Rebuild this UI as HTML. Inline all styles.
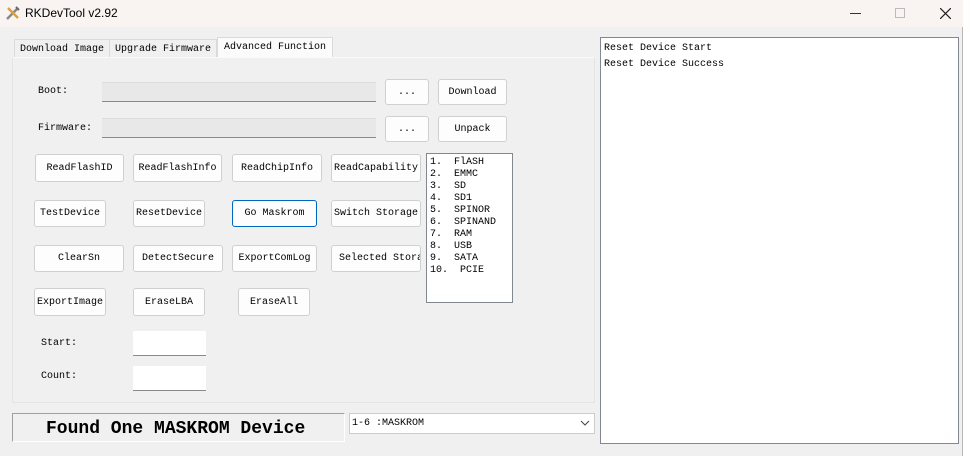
<!DOCTYPE html>
<html><head><style>
*{box-sizing:border-box;margin:0;padding:0}
body{width:970px;height:456px;background:#fff;position:relative;overflow:hidden;font-family:"Liberation Mono","Noto Sans CJK SC",monospace;font-size:10px;color:#000}
.win{position:absolute;left:0;top:0;width:963px;height:456px;background:#f0f0f0;border-right:1px solid #b8b8b8}
.title{position:absolute;left:0;top:0;width:963px;height:27px;background:#f9f4f1;font-family:"Liberation Sans",sans-serif;font-size:12px}
.a{position:absolute}
.btn{position:absolute;background:#fdfdfd;border:1px solid #d0d0d0;border-radius:3px;display:flex;align-items:center;justify-content:center;white-space:nowrap;overflow:hidden}
.in{position:absolute;background:#e8e8e8;border-bottom:1px solid #8a8a8a;border-top:1px solid #ddd}
.wh{position:absolute;background:#fff;border-bottom:1px solid #8a8a8a}
.tab{position:absolute;top:39px;height:19px;padding-top:4px;text-align:center;background:#f0f0f0;border:1px solid #dadada;border-bottom:none}
</style></head><body>
<div class="win"></div>
<div class="title">
<svg class="a" style="left:5px;top:5px" width="16" height="16"><path d="M2 14 L12 4" stroke="#888" stroke-width="2.5"/><path d="M3 3 L13 13" stroke="#e0a030" stroke-width="2.5"/><path d="M11 2 l3 3" stroke="#666" stroke-width="2"/></svg>
<div class="a" style="left:25px;top:6px">RKDevTool v2.92</div>
<div class="a" style="left:850px;top:13px;width:11px;height:1px;background:#333"></div>
<div class="a" style="left:895px;top:8px;width:10px;height:10px;border:1px solid #bbb"></div>
<svg class="a" style="left:940px;top:8px" width="11" height="11"><path d="M0 0L11 11M11 0L0 11" stroke="#222" stroke-width="1.2"/></svg>
</div>
<div class="tab" style="left:14px;width:96px">Download Image</div>
<div class="tab" style="left:109px;width:108px">Upgrade Firmware</div>
<div class="tab" style="left:217px;width:116px;top:37px;height:21px;padding-top:4px;background:#fbfbfb">Advanced Function</div>
<div class="a" style="left:12px;top:57px;width:583px;height:346px;border:1px solid #e4e4e4;border-top-color:#fafafa;background:#f0f0f0"></div>
<div class="a" style="left:38px;top:86px">Boot:</div>
<div class="in" style="left:102px;top:82px;width:274px;height:20px"></div>
<div class="btn" style="left:385px;top:79px;width:44px;height:26px">...</div>
<div class="btn" style="left:438px;top:79px;width:69px;height:26px">Download</div>
<div class="a" style="left:38px;top:123px">Firmware:</div>
<div class="in" style="left:102px;top:118px;width:274px;height:20px"></div>
<div class="btn" style="left:385px;top:116px;width:44px;height:26px">...</div>
<div class="btn" style="left:438px;top:116px;width:69px;height:26px">Unpack</div>

<div class="btn" style="left:35px;top:154px;width:89px;height:28px">ReadFlashID</div>
<div class="btn" style="left:133px;top:154px;width:89px;height:28px">ReadFlashInfo</div>
<div class="btn" style="left:232px;top:154px;width:90px;height:28px">ReadChipInfo</div>
<div class="btn" style="left:331px;top:154px;width:90px;height:28px">ReadCapability</div>

<div class="btn" style="left:34px;top:200px;width:72px;height:27px">TestDevice</div>
<div class="btn" style="left:133px;top:200px;width:72px;height:27px">ResetDevice</div>
<div class="btn" style="left:232px;top:200px;width:85px;height:27px;border:1px solid #0067c0">Go Maskrom</div>
<div class="btn" style="left:331px;top:200px;width:90px;height:27px">Switch Storage</div>

<div class="btn" style="left:34px;top:245px;width:90px;height:27px">ClearSn</div>
<div class="btn" style="left:133px;top:245px;width:90px;height:27px">DetectSecure</div>
<div class="btn" style="left:232px;top:245px;width:85px;height:27px">ExportComLog</div>
<div class="btn" style="left:331px;top:245px;width:90px;height:27px;justify-content:flex-start;padding-left:7px">Selected Stora</div>

<div class="btn" style="left:34px;top:288px;width:72px;height:28px">ExportImage</div>
<div class="btn" style="left:133px;top:288px;width:72px;height:28px">EraseLBA</div>
<div class="btn" style="left:238px;top:288px;width:72px;height:28px">EraseAll</div>

<div class="a" style="left:426px;top:153px;width:87px;height:150px;background:#fff;border:1px solid #828790;padding:3px 0 0 3px;line-height:12px;white-space:pre">1.  FlASH
2.  EMMC
3.  SD
4.  SD1
5.  SPINOR
6.  SPINAND
7.  RAM
8.  USB
9.  SATA
10.  PCIE</div>

<div class="a" style="left:41px;top:338px">Start:</div>
<div class="wh" style="left:133px;top:331px;width:73px;height:25px"></div>
<div class="a" style="left:41px;top:371px">Count:</div>
<div class="wh" style="left:133px;top:366px;width:73px;height:25px"></div>

<div class="a" style="left:12px;top:413px;width:333px;height:29px;border:1px solid #a0a0a0;border-right-color:#fff;border-bottom-color:#fff;font-size:18px;font-weight:bold;padding:5px 0 0 33px;white-space:nowrap">Found One MASKROM Device</div>
<div class="a" style="left:349px;top:413px;width:246px;height:21px;background:#fff;border:1px solid #ccc;padding:4px 0 0 2px">1-6 :MASKROM</div>
<svg class="a" style="left:580px;top:420px" width="10" height="6"><path d="M1 1L5 5L9 1" stroke="#444" fill="none"/></svg>

<div class="a" style="left:600px;top:37px;width:359px;height:407px;background:#fff;border:1px solid #828790;padding:3px 0 0 3px;line-height:16px">Reset Device Start<br>Reset Device Success</div>
</body></html>
